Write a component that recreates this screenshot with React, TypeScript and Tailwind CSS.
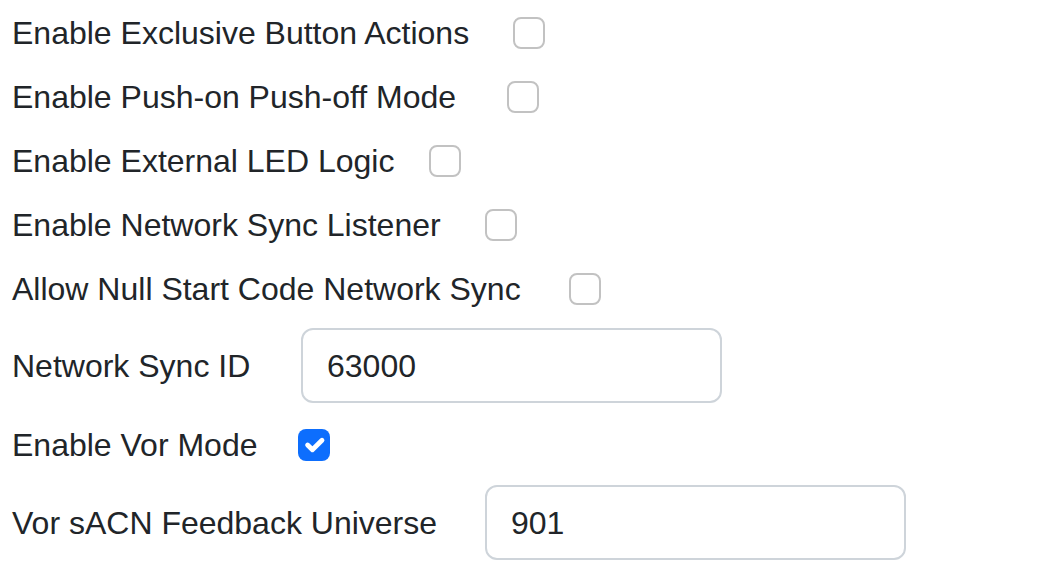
import React from 'react'

const font = { fontFamily: '"Liberation Sans", Arial, sans-serif' }

function Check({ checked }: { checked?: boolean }) {
  if (checked) {
    return (
      <span className="inline-flex w-[32px] h-[32px] shrink-0 items-center justify-center rounded-[8px] bg-[#0d6efd]">
        <svg viewBox="0 0 20 20" className="w-[32px] h-[32px]" fill="none">
          <path d="m6 10 3 3 6-6" stroke="#fff" strokeWidth="3" strokeLinecap="round" strokeLinejoin="round" />
        </svg>
      </span>
    )
  }
  return <span className="inline-block w-[32px] h-[32px] shrink-0 rounded-[8px] border-2 border-[#c2c2c2] bg-white" />
}

function CheckRow({ label, width, checked }: { label: string; width: string; checked?: boolean }) {
  return (
    <div className="flex items-center h-16 gap-[41px]">
      <span className={`${width} whitespace-nowrap`}>{label}</span>
      <Check checked={checked} />
    </div>
  )
}

function InputRow({ label, width, value }: { label: string; width: string; value: string }) {
  return (
    <div className="flex items-center gap-[49px]">
      <span className={`${width} whitespace-nowrap`}>{label}</span>
      <div className="flex items-center w-[421px] h-[75px] rounded-[12px] border-2 border-[#ced4da] px-[24px]">
        {value}
      </div>
    </div>
  )
}

export default function App() {
  return (
    <div className="w-[1060px] h-[576px] bg-white text-[#212529] text-[32px] pl-[12px] pt-px" style={font}>
      <CheckRow label="Enable Exclusive Button Actions" width="w-[460px]" />
      <CheckRow label="Enable Push-on Push-off Mode" width="w-[454px]" />
      <CheckRow label="Enable External LED Logic" width="w-[376px]" />
      <CheckRow label="Enable Network Sync Listener" width="w-[432px]" />
      <CheckRow label="Allow Null Start Code Network Sync" width="w-[516px]" />
      <div className="mt-[7px]">
        <InputRow label="Network Sync ID" width="w-[240px]" value="63000" />
      </div>
      <div className="mt-[10px]">
        <CheckRow label="Enable Vor Mode" width="w-[245px]" checked />
      </div>
      <div className="mt-[8px]">
        <InputRow label="Vor sACN Feedback Universe" width="w-[424px]" value="901" />
      </div>
    </div>
  )
}
